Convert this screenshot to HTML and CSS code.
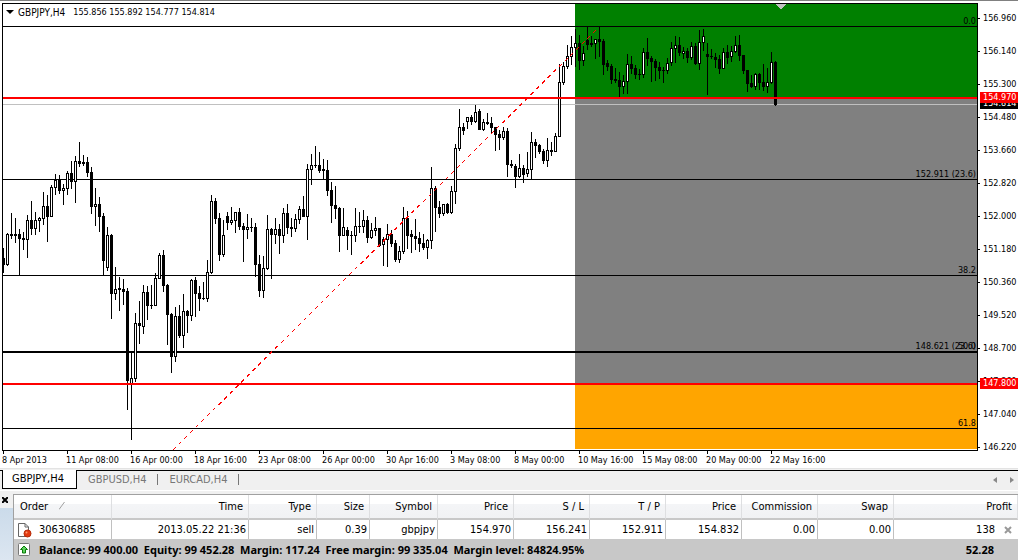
FILE: index.html
```html
<!DOCTYPE html>
<html lang="en">
<head>
<meta charset="utf-8">
<title>GBPJPY,H4</title>
<link rel="stylesheet" href="styles.css">
</head>
<body>
<div class="chart">
  <div class="plot">
    <svg class="canvas" id="canvas">
      <g transform="translate(-3,-4)" shape-rendering="crispEdges">
        <!-- zones -->
        <rect x="575" y="4" width="100%" height="94" fill="#008000"/>
        <rect x="575" y="98" width="100%" height="286" fill="#808080"/>
        <rect x="575" y="384" width="100%" height="65" fill="#ffa500"/>
        <path d="M775 4h11l-5 5h-1z" fill="#c0c0c0"/>
        <!-- levels -->
        <rect x="3" y="26" width="100%" height="1"/>
        <rect x="3" y="179" width="100%" height="1"/>
        <rect x="3" y="275" width="100%" height="1"/>
        <rect x="3" y="351" width="100%" height="2"/>
        <rect x="3" y="428" width="100%" height="1"/>
        <rect x="3" y="104" width="100%" height="1" fill="#c0c0c0"/>
        <path id="bodies"/>
        <path id="hollow" fill="#fff"/>
        <line x1="173" y1="450" x2="599" y2="27" class="trend"/>
        <rect x="3" y="97" width="100%" height="2" fill="#f00"/>
        <rect x="3" y="383" width="100%" height="2" fill="#f00"/>
        <g class="levels" transform="translate(2,0)">
          <text x="100%" y="24">0.0</text>
          <text x="100%" y="177">152.911 (23.6)</text>
          <text x="100%" y="273">38.2</text>
          <text x="100%" y="349">148.621 (23.6)</text>
          <text x="100%" y="349">50.0</text>
          <text x="100%" y="426">61.8</text>
        </g>
      </g>
    </svg>
    <div class="title"><svg width="8" height="5"><path d="M0 0h8L4 4z"/></svg><span class="symbol">GBPJPY,H4</span><span>155.856 155.892 154.777 154.814</span></div>
  </div>
  <div class="prices">
    <ul>
      <li>156.960</li>
      <li>156.140</li>
      <li>155.300</li>
      <li>154.480</li>
      <li>153.660</li>
      <li>152.820</li>
      <li>152.000</li>
      <li>151.180</li>
      <li>150.360</li>
      <li>149.520</li>
      <li>148.700</li>
      <li>147.860</li>
      <li>147.040</li>
      <li>146.220</li>
    </ul>
    <div class="tag now">154.814</div>
    <div class="tag stop">154.970</div>
    <div class="tag target">147.800</div>
  </div>
  <ul class="times">
    <li>8 Apr 2013</li>
    <li>11 Apr 08:00</li>
    <li>16 Apr 00:00</li>
    <li>18 Apr 16:00</li>
    <li>23 Apr 08:00</li>
    <li>26 Apr 00:00</li>
    <li>30 Apr 16:00</li>
    <li>3 May 08:00</li>
    <li>8 May 00:00</li>
    <li>10 May 16:00</li>
    <li>15 May 08:00</li>
    <li>20 May 00:00</li>
    <li>22 May 16:00</li>
  </ul>
</div>

<div class="tabs">
  <button class="tab on">GBPJPY,H4</button>
  <button class="tab">GBPUSD,H4</button>
  <button class="tab">EURCAD,H4</button>
  <div class="scroll">
    <button aria-label="Previous"><svg width="4" height="6"><path d="M4 0v6L0 3z"/></svg></button>
    <button aria-label="Next"><svg width="4" height="6"><path d="M0 0v6l4-3z"/></svg></button>
  </div>
</div>

<div class="terminal">
  <div class="dock">
    <button aria-label="Close"><svg width="6" height="6"><path d="M0 0l6 6M6 0L0 6" stroke="#000" stroke-width="2"/></svg></button>
  </div>
  <table class="orders">
    <colgroup>
      <col class="c-order"><col class="c-time"><col class="c-type"><col class="c-size"><col class="c-symbol">
      <col class="c-num"><col class="c-num"><col class="c-num"><col class="c-num"><col class="c-num"><col class="c-num"><col>
    </colgroup>
    <thead>
      <tr>
        <th>Order <svg class="sort" width="7" height="8"><path d="M0 7.500L5.500 0" fill="none" stroke="#a0a0a0"/></svg></th>
        <th>Time</th><th>Type</th><th>Size</th><th>Symbol</th><th>Price</th><th>S / L</th><th>T / P</th><th>Price</th><th>Commission</th><th>Swap</th><th>Profit</th>
      </tr>
    </thead>
    <tbody>
      <tr>
        <td><div class="order">
          <svg width="15" height="16" viewBox="0 0 15 16"><path d="M1.500 1.500h6.500l3.500 3.500v9.500h-10z" fill="#fff" stroke="#666"/><path d="M8 1.500V5h3.500" fill="none" stroke="#666"/><circle cx="10.500" cy="11.500" r="3.500" fill="#e33a10" stroke="#b52a08"/><circle cx="9.500" cy="10.500" r="1" fill="#ff9a70"/></svg>
          306306885</div></td>
        <td>2013.05.22 21:36</td><td>sell</td><td>0.39</td><td>gbpjpy</td><td>154.970</td><td>156.241</td><td>152.911</td><td>154.832</td><td>0.00</td><td>0.00</td>
        <td><div class="profit">138 <button aria-label="Close order"><svg width="8" height="8"><path d="M1 1l6 6M7 1L1 7" stroke="#999" stroke-width="2"/></svg></button></div></td>
      </tr>
    </tbody>
    <tfoot>
      <tr>
        <td colspan="11"><div class="order">
          <svg width="15" height="16" viewBox="0 0 15 16"><rect x="1.500" y="1.500" width="11" height="12" rx="1" fill="#fff" stroke="#777"/><path d="M7 4l3.500 3.500h-2v3.500h-3V7.500h-2z" fill="#5fd35f" stroke="#087a08"/></svg>
          <span>Balance: 99 400.00&nbsp; Equity: 99 452.28&nbsp; Margin: 117.24&nbsp; Free margin: 99 335.04&nbsp; Margin level: 84824.95%</span></div></td>
        <td class="total">52.28</td>
      </tr>
    </tfoot>
  </table>
</div>
<script src="chart.js"></script>
</body>
</html>
```
FILE: styles.css
```css
body, ul, li { margin:0; padding:0; }
body { background:#f0f0f0; font:11px/14px "DejaVu Sans Condensed","DejaVu Sans","Noto Sans",sans-serif; color:#000; }
li { list-style:none; }
button { margin:0; padding:0; border:0; background:none; font:inherit; color:inherit; cursor:pointer; }
svg { display:block; }

/* chart */
.chart { display:grid; grid-template-columns:1fr 40px; grid-template-rows:448px 17px; padding:2px 0 0 2px; border-top:1px solid #808080; border-bottom:1px solid #e3e3e3; background:#fff; font-size:9px; line-height:11px; }
.plot { position:relative; border:1px solid #000; overflow:hidden; }
.canvas { width:100%; height:100%; }
.trend { stroke:#f00; stroke-dasharray:4 4; }
.levels { text-anchor:end; }
.title { position:absolute; left:3px; top:3px; display:flex; align-items:center; gap:4px; line-height:11px; }
.symbol { font-size:10px; padding-right:4px; }
.prices { position:relative; }
.prices li { display:flex; align-items:center; gap:3px; height:33px; }
.prices li:before { content:""; width:2px; height:1px; background:#000; }
.prices ul { margin-top:-1px; }
.tag { position:absolute; left:2px; right:0; height:11px; padding-left:3px; color:#fff; }
.now { top:95px; background:#000; }
.stop { top:89px; background:#f00; }
.target { top:375px; background:#f00; }
.times { grid-column:1 / 3; display:flex; overflow:hidden; }
.times li { position:relative; flex:0 0 64px; padding-top:4px; white-space:nowrap; }
.times li:before { content:""; position:absolute; left:1px; top:0; width:1px; height:3px; background:#000; }

/* chart tabs */
.tabs { display:flex; height:20px; margin-top:1px; padding-left:2px; background:linear-gradient(#000,#000) 0 0 / 100% 1px no-repeat #f0f0f0; border-bottom:1px solid #fff; }
.tab { height:19px; padding:0 12px 0 11px; color:#777; position:relative; }
.tab:after { content:""; position:absolute; right:0; top:4px; width:1px; height:11px; background:#777; }
.tab.on { padding:0 12px 0 9px; background:#fff; border:1px solid #000; border-top:0; color:#000; }
.tab.on:after { display:none; }
.scroll { display:flex; gap:13px; margin-left:auto; padding-right:4px; fill:#888; }

/* terminal */
.terminal { display:flex; margin-top:3px; }
.dock { flex:0 0 13px; padding-top:3px; background:linear-gradient(#f0f0f0 14px,#cbdbea 14px,#dce6f1); }
.dock button { display:block; margin-left:2px; }
.orders { flex:1; min-width:0; width:100%; table-layout:fixed; border-collapse:separate; border-spacing:0; border-left:1px solid #a0a0a0; border-top:1px solid #a0a0a0; background:#fff; }
.c-order { width:98px; }
.c-time { width:137px; }
.c-type { width:68px; }
.c-size { width:53px; }
.c-symbol { width:68px; }
.c-num { width:76px; }
.orders th, .orders td { padding:0; text-align:right; white-space:nowrap; }
.orders th { height:23px; padding-right:5px; font-weight:normal; background:linear-gradient(#fff 40%,#f4f5f7 41%,#f1f2f4); border-right:1px solid #dedfe1; border-bottom:2px solid #c8c8c8; }
.orders th:first-child { padding-left:6px; text-align:left; }
.sort { display:inline-block; margin-left:8px; }
.orders tbody td { height:19px; padding-right:2px; border-right:1px solid #c0c0c0; }
.orders tbody td:last-child { padding-right:6px; border-right:0; }
.order { display:flex; align-items:center; gap:7px; padding-left:3px; }
.profit { display:flex; align-items:center; justify-content:flex-end; gap:9px; }
.orders tfoot td { height:21px; background:#c8c8c8; font-family:"Noto Sans","Open Sans",sans-serif; font-weight:bold; }
.orders tfoot .total { padding-right:24px; }
```
FILE: chart.js
```javascript
// high, body top, body bottom, low, 1 = rising bar
var bars = [
[248,258,265,273,0],[233,234,265,266,1],[213,234,236,239,0],[218,234,236,243,0],[229,234,239,275,0],[232,238,240,250,0],[215,220,240,258,1],[201,220,229,235,0],
[212,220,229,235,1],[217,218,221,232,1],[192,206,219,225,1],[195,206,217,242,0],[185,187,217,217,1],[174,180,188,195,1],[175,180,191,194,0],[184,188,191,205,1],
[171,173,189,195,1],[161,173,182,189,0],[156,161,182,203,1],[142,161,164,167,0],[155,162,164,166,0],[157,162,173,177,0],[167,172,207,214,0],[188,204,207,226,1],
[197,204,217,232,0],[213,216,261,275,0],[227,235,268,271,1],[234,235,294,319,0],[267,289,294,300,1],[277,288,290,311,0],[279,289,292,305,0],[288,291,381,410,0],
[352,378,385,440,1],[313,323,379,382,1],[301,323,326,344,0],[285,292,327,334,1],[286,292,306,320,0],[285,305,306,309,0],[273,278,306,306,1],[253,255,279,279,1],
[250,255,286,292,0],[284,285,315,345,0],[313,314,357,373,0],[307,316,357,362,1],[305,316,336,338,0],[294,311,336,348,1],[310,311,316,333,0],[279,280,316,321,1],
[277,280,294,317,0],[286,293,299,311,0],[282,298,299,300,0],[260,272,299,302,1],[195,201,273,274,1],[198,201,219,224,0],[213,218,255,261,0],[220,235,255,257,1],
[212,216,223,230,0],[207,220,223,225,1],[212,212,221,233,1],[208,212,227,230,0],[223,226,230,262,0],[214,227,230,239,1],[218,227,228,232,0],[223,227,265,277,0],
[255,264,291,297,0],[256,268,291,298,1],[215,229,269,270,1],[228,229,235,279,0],[218,229,235,244,1],[224,229,236,254,0],[208,213,236,243,1],[204,213,228,234,0],
[218,227,229,237,0],[214,219,229,232,1],[206,209,220,224,1],[196,209,217,217,0],[164,169,217,240,1],[154,165,170,185,1],[146,165,166,168,0],[152,165,171,173,0],
[159,169,171,179,0],[160,170,191,196,0],[182,190,206,223,0],[186,205,209,219,0],[207,208,236,252,0],[208,227,236,236,1],[227,230,236,250,0],[231,235,236,255,0],
[208,226,236,242,1],[212,226,227,233,0],[210,220,227,233,1],[216,220,238,243,0],[223,230,238,239,1],[217,228,231,236,1],[228,228,246,247,0],[237,239,245,266,1],
[224,234,240,267,1],[230,234,244,247,0],[240,243,260,262,0],[246,251,260,263,1],[207,218,252,254,1],[211,218,236,249,0],[230,234,237,253,0],[219,236,239,250,0],
[232,238,244,252,0],[234,243,248,250,0],[239,240,248,259,1],[167,188,241,249,1],[186,188,208,232,0],[201,207,214,218,0],[204,204,214,216,1],[203,204,213,214,0],
[186,191,213,214,1],[144,148,192,204,1],[109,127,149,151,1],[123,127,131,135,0],[117,117,122,129,1],[115,117,122,125,0],[105,112,122,123,1],[109,111,130,130,0],
[119,122,130,131,1],[113,122,124,125,0],[117,123,128,134,0],[127,127,135,151,0],[130,134,138,150,0],[127,131,138,140,1],[128,131,165,177,0],[160,164,166,168,0],
[164,166,177,188,0],[154,168,177,178,1],[165,168,175,183,0],[152,169,174,177,1],[132,142,170,179,1],[139,142,146,158,0],[144,145,152,154,0],[149,151,161,164,0],
[138,150,161,167,1],[142,150,152,156,0],[133,136,152,152,1],[64,82,137,137,1],[62,66,83,85,1],[45,56,67,69,1],[36,47,57,65,1],[29,43,48,67,1],
[35,43,61,70,0],[46,53,61,66,1],[27,40,45,50,0],[36,43,45,47,0],[39,39,44,59,1],[27,39,42,57,0],[39,41,65,75,0],[60,63,67,71,0],
[64,66,80,84,0],[68,79,81,83,0],[72,80,87,97,0],[75,81,87,94,1],[54,64,82,94,1],[56,64,69,74,0],[65,68,75,79,0],[69,74,75,80,0],
[48,52,75,78,1],[38,52,59,66,0],[56,58,62,82,0],[59,61,68,81,0],[62,67,71,79,0],[67,70,71,83,0],[58,63,71,74,1],[42,48,63,66,1],
[36,45,49,63,1],[37,45,53,56,0],[47,51,54,59,1],[48,51,58,63,0],[42,46,58,60,1],[43,46,64,65,0],[30,42,64,70,1],[29,36,43,51,1],
[43,54,57,95,0],[49,56,57,59,0],[53,57,60,68,0],[55,59,69,74,0],[48,52,69,69,1],[45,52,58,64,0],[46,51,57,62,1],[36,45,52,53,1],
[35,45,56,61,0],[55,55,71,74,0],[70,70,84,92,0],[75,83,87,88,0],[73,74,87,90,1],[73,74,83,90,0],[64,82,87,91,0],[68,82,87,93,1],
[52,62,83,84,1],[61,62,105,106,0]
];

function box(x, y, w, h) {
	return "M" + x + " " + y + "h" + w + "v" + h + "h-" + w + "z";
}

var solid = "", hollow = "";
for (var i = 0; i < bars.length; i++) {
	var b = bars[i], x = 3 + i * 4;
	solid += box(x, b[0], 1, b[3] - b[0]) + box(x - 1, b[1], 3, b[2] - b[1]);
	if (b[4]) hollow += box(x, b[1] + 1, 1, b[2] - b[1] - 2);
}
document.getElementById("bodies").setAttribute("d", solid);
document.getElementById("hollow").setAttribute("d", hollow);
```
